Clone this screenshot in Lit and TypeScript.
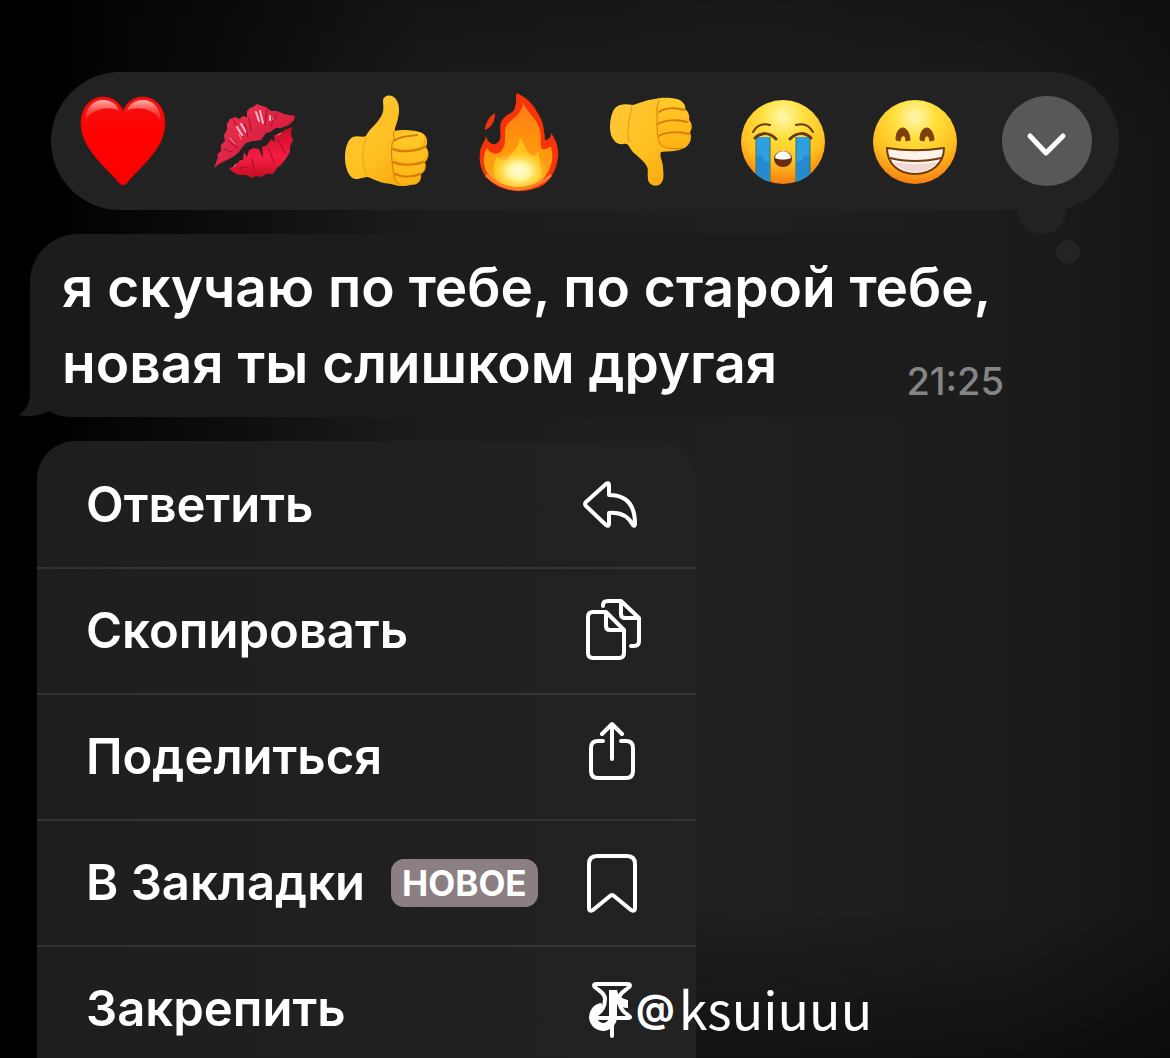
import { LitElement, html, svg, css } from "lit";
import { customElement, property } from "lit/decorators.js";

const reactions = [
  {
    name: "Сердце",
    art: svg`
      <path d="M50 94C47 94 45 90 42 87C28 72 8 55 8 32C8 16 18 6 30 6C40 6 47 12 50 20C53 12 60 6 70 6C82 6 92 16 92 32C92 55 72 72 58 87C55 90 53 94 50 94Z" fill="url(#heartFill)" stroke="#c80a0c" stroke-width="1"/>
      <path d="M12 31C12 17 20 9 30 9C38 9 44 13 46 20C39 15 18 16 12 31Z" fill="url(#heartShine)"/>
      <path d="M88 31C88 17 80 9 70 9C62 9 56 13 54 20C61 15 82 16 88 31Z" fill="url(#heartShine)"/>`,
  },
  {
    name: "Поцелуй",
    art: svg`
      <path d="M9 77L13 66L12 64L16 60L16 54L20 50L19 44L22 39L22 33L25 28L30 26L34 28L38 25L42 26L42 20L45 17L48 16L52 13L57 15L61 16L66 20L72 20L79 23L90 25L89 29L84 34L76 37L71 37L65 41L61 42L56 49L48 50L41 52L36 58L34 61L28 66L20 70L14 73Z" fill="url(#lipTop)"/>
      <path d="M24 78L31 74L35 69L38 69L39 61L42 66L44 59L49 57L54 58L58 67L57 56L62 54L66 48L70 51L69 44L76 42L80 39L87 36L86 43L88 49L85 56L85 61L80 69L76 74L72 77L68 83L61 83L57 86L51 85L47 87L41 84L33 84L28 81Z" fill="url(#lipBottom)"/>
      <g fill="none" stroke="#ffb9c4" stroke-linecap="round" stroke-width="2">
        <path d="M32 36L37 44M36 33L41 41M51 21L54 30M55 20L58 32M65 25L65 29" />
        <path d="M25 47L30 53M34 43L36 48M68 27L69 30M29 76L31 73M73 44L76 42" stroke="#f8909c" stroke-width="1"/>
      </g>
      <g fill="none" stroke="#ab0a28" stroke-linecap="round" stroke-width="1">
        <path d="M19 58L27 61M23 50L33 57M44 27L46 40M62 18L60 34M28 28L31 34M72 23L66 35M47 68L49 80M64 58L69 72M73 48L80 62M35 77L42 76M40 33L43 46"/>
      </g>`,
  },
  {
    name: "Палец вверх",
    art: svg`
      <path d="M46 9C47 4 54 3 58 7C62 11 63 19 61 27C60 33 57 38 58 40C64 38 80 39 85 42C91 45 91 52 89 56C93 61 92 68 88 71C90 76 88 81 84 83C85 89 82 94 74 94C66 96 60 95 54 93C44 92 38 89 31 86C27 86 24 88 18 88C11 86 8 76 8 66C8 57 11 48 16 46C21 44 26 47 29 45C32 38 39 34 43 27C48 21 46 14 46 9Z" fill="url(#hand)"/>
      <path d="M55 49C59 42 77 38 86 43C88 47 88 53 82 56C72 58 57 60 56 53ZM56 60C63 63 79 61 88 57C92 62 89 69 84 70C73 73 58 72 56 66ZM56 73C62 76 78 75 87 71C89 77 86 82 81 83C72 86 59 84 56 79ZM57 84C63 87 75 87 83 84C83 90 79 93 73 93C65 95 58 91 57 84Z" fill="url(#finger)"/>
      <g fill="none" stroke="#d97b08" stroke-width="2" stroke-linecap="round">
        <path d="M57 50C60 46 72 45 80 44M56 58C64 62 80 60 88 56M56 71C65 75 79 74 87 71M58 83C66 87 76 86 83 83"/>
        <path d="M58 40C54 42 59 45 56 50C53 58 55 74 57 84C57 88 59 91 62 93" stroke-width="1"/>
        <path d="M29 47C25 55 24 75 30 85" stroke="#eda315" stroke-width="1"/>
      </g>`,
  },
  {
    name: "Огонь",
    art: svg`
      <path d="M48 2C58 7 65 14 68 21C75 30 75 40 76 49C80 49 82 46 82 42C87 49 90 57 89 66C88 73 87 78 83 84C78 95 65 100 50 100C34 100 20 92 15 83C11 76 10 69 11 62C11 55 16 51 17 45C19 53 26 56 30 50C34 45 28 35 34 28C38 22 45 23 46 16C48 11 46 5 48 2Z" fill="#f63408"/>
      <path d="M26 22C26 30 23 36 16 39C16 31 21 25 26 22Z" fill="#f3330b"/>
      <path d="M54 12C58 21 69 28 71 40C73 48 70 53 73 58C78 59 80 56 82 56C85 66 83 76 77 84C70 98 33 101 20 84C14 78 13 64 18 57C22 65 32 64 34 57C38 51 34 41 38 34C43 27 53 24 54 12Z" fill="url(#flame)"/>
      <path d="M51 47C57 53 56 62 63 65C66 67 68 60 70 61C70 72 73 76 72 86C67 99 33 99 27 87C23 78 25 69 29 65C32 73 38 70 40 66C45 60 50 56 51 47Z" fill="#ffc219"/>
      <ellipse cx="50" cy="80" rx="28" ry="21" fill="url(#glow)"/>
      <path d="M17 84C29 94 36 97 49 98C65 97 74 92 82 84" fill="none" stroke="#ff7d2c" stroke-width="3"/>`,
  },
  {
    name: "Палец вниз",
    art: svg`
      <path d="M54 8C61 6 75 6 80 10C84 13 85 16 84 18C88 21 89 26 88 29C91 32 92 37 89 41C92 48 88 56 81 58C74 61 66 60 60 61C58 65 62 70 62 77C63 85 63 91 58 94C53 96 47 93 47 88C46 82 48 78 45 74C41 67 33 64 29 57C27 53 26 52 22 53C17 54 13 51 10 44C8 36 9 24 14 17C19 12 26 13 32 14C39 12 45 9 54 8Z" fill="url(#hand)"/>
      <path d="M58 15C58 7 75 6 80 10C83 13 83 17 79 18C71 17 64 18 58 21ZM57 25C60 19 78 16 85 20C88 24 87 28 82 29C74 28 64 30 57 33ZM57 37C63 31 80 29 87 32C91 36 89 41 84 43C73 41 64 43 58 46ZM58 49C62 43 80 41 88 44C90 52 86 57 80 57C68 59 58 56 58 49Z" fill="url(#finger)"/>
      <g fill="none" stroke="#d97b08" stroke-width="2" stroke-linecap="round">
        <path d="M58 21C63 17 74 16 83 19M57 33C64 29 76 28 86 31M58 45C64 41 79 40 88 43"/>
        <path d="M58 10C54 18 57 25 56 33C56 41 57 49 59 53C61 57 74 59 81 57" stroke-width="1"/>
        <path d="M31 15C29 25 25 39 28 51" stroke="#e79513" stroke-width="1"/>
      </g>`,
  },
  {
    name: "Рыдаю",
    art: svg`
      <circle cx="50" cy="51" r="42" fill="url(#face)"/>
      <g clip-path="url(#faceClip)">
        <path d="M23 46H37V96H23ZM63 46H77V96H63Z" fill="#2f9fe0"/>
        <path d="M28 64C31 70 34 72 36 70V96H23V66ZM72 64C69 70 66 72 64 70V96H77V66Z" fill="#248bd1"/>
        <path d="M23 46V96M37 46V96M63 46V96M77 46V96" stroke="#287d62" stroke-width="1"/>
      </g>
      <g fill="none" stroke="#6b390d" stroke-linecap="round">
        <path d="M20 41C24 34 30 32 37 34M80 41C76 34 70 32 63 34" stroke-width="2"/>
        <path d="M22 47C28 41 36 41 43 48M78 47C72 41 64 41 57 48" stroke-width="3"/>
      </g>
      <ellipse cx="50" cy="68" rx="9" ry="8" fill="#6a2c0c"/>
      <path d="M42 67C43 58 57 58 58 67C53 69 47 69 42 67Z" fill="#fff"/>`,
  },
  {
    name: "Смех",
    art: svg`
      <circle cx="50" cy="51" r="42" fill="url(#face)"/>
      <path d="M31 49C31 33 44 33 45 49L41 50C41 43 36 43 35 50ZM55 49C55 33 68 33 69 49L65 50C64 43 60 43 59 50Z" fill="#7c3f0a" stroke="#7c3f0a" stroke-linejoin="round"/>
      <path d="M22 57C40 60 60 60 79 57C79 73 66 83 50 83C34 83 22 73 22 57Z" fill="#fff3ec" stroke="#713a0c" stroke-width="2" stroke-linejoin="round"/>
      <path d="M25 67C40 71 60 71 76 67" fill="none" stroke="#713a0c" stroke-width="2"/>
      <path d="M28 71C40 74 60 74 73 71C61 84 40 84 28 71Z" fill="#eed8d1"/>`,
  },
];

const emojiDefs = svg`<defs>
  <linearGradient id="heartFill" x2="0" y2="1"><stop offset="0" stop-color="#ef1515"/><stop offset=".4" stop-color="#ff0200"/><stop offset="1" stop-color="#fa0000"/></linearGradient>
  <linearGradient id="heartShine" x2="0" y2="1"><stop offset="0" stop-color="#ffb0ab"/><stop offset="1" stop-color="#ff2a22" stop-opacity=".3"/></linearGradient>
  <linearGradient id="lipTop" x2="1" y2="1"><stop offset="0" stop-color="#ed3855"/><stop offset=".5" stop-color="#dd2445"/><stop offset="1" stop-color="#d40b22"/></linearGradient>
  <linearGradient id="lipBottom" x2="0" y2="1"><stop offset="0" stop-color="#c70b25"/><stop offset=".6" stop-color="#f51e42"/><stop offset="1" stop-color="#c40d22"/></linearGradient>
  <linearGradient id="hand" x2="1" y2="1"><stop offset="0" stop-color="#ffc83a"/><stop offset=".5" stop-color="#ffc120"/><stop offset="1" stop-color="#f19c08"/></linearGradient>
  <linearGradient id="finger" x2="0" y2="1"><stop offset="0" stop-color="#ffcc2a"/><stop offset="1" stop-color="#fdb114"/></linearGradient>
  <linearGradient id="flame" x2="0" y2="1"><stop offset="0" stop-color="#ff7a16"/><stop offset=".5" stop-color="#ff960c"/><stop offset="1" stop-color="#ffa51c"/></linearGradient>
  <radialGradient id="glow"><stop offset="0" stop-color="#fffbe0"/><stop offset=".4" stop-color="#fff59a"/><stop offset="1" stop-color="#ffd52a" stop-opacity="0"/></radialGradient>
  <radialGradient id="face" cx=".5" cy=".2" r=".84"><stop offset="0" stop-color="#fff7b0"/><stop offset=".3" stop-color="#ffe03c"/><stop offset=".65" stop-color="#ffc021"/><stop offset="1" stop-color="#f5730e"/></radialGradient>
  <clipPath id="faceClip"><circle cx="50" cy="51" r="42"/></clipPath>
</defs>`;

const actions = [
  {
    label: "Ответить",
    icon: svg`<path d="M27 11L7 29Q5 31 7 33L27 52Q30 54 30 51V40C42 39 49 43 54 52Q56 54 56 51C56 34 49 22 30 22V12Q30 9 27 11Z"/>`,
  },
  {
    label: "Скопировать",
    icon: svg`<path d="M27 13H14Q9 13 9 18V54Q9 59 14 59H40Q45 59 45 54V31ZM27 13V27Q27 31 31 31H45"/><path d="M24 7V6Q24 2 29 2H42L60 19V42Q60 47 55 47H52M42 2V15Q42 19 46 19H60"/>`,
  },
  {
    label: "Поделиться",
    icon: svg`<path d="M24 16H19Q12 16 12 23V46Q12 53 19 53H47Q54 53 54 46V23Q54 16 47 16H42M33 34V0M23 9L33 -1L43 9"/>`,
  },
  {
    label: "В Закладки",
    badge: "НОВОЕ",
    icon: svg`<path d="M18 5H48Q56 5 56 13V57Q56 61 52 59L35 45Q33 43 31 45L14 59Q10 61 10 57V13Q10 5 18 5Z"/>`,
  },
  {
    label: "Закрепить",
    icon: svg`<path d="M17 7H49Q53 8 49 11C44 15 40 17 40 22C40 29 42 34 49 38Q53 41 49 41H17Q13 41 17 38C24 34 26 29 26 22C26 17 22 15 17 11Q13 8 17 7ZM33 42V59"/>`,
  },
];

@customElement("reaction-bar")
class ReactionBar extends LitElement {
  static styles = css`
    :host {
      display: block;
      position: relative;
    }
    .bar {
      display: grid;
      grid-template-columns: repeat(8, 1fr);
      align-items: center;
      justify-items: center;
      padding: 19px 6px;
      border-radius: 69px;
      background: #222;
      position: relative;
    }
    button {
      display: grid;
      padding: 0;
      border: 0;
      background: none;
      cursor: pointer;
    }
    .emoji {
      width: 100px;
      height: 100px;
      overflow: visible;
    }
    .more {
      width: 90px;
      height: 90px;
      border-radius: 50%;
      background: #585858;
      place-items: center;
    }
    .dot {
      position: absolute;
      border-radius: 50%;
      background: #222;
    }
    .large {
      width: 48px;
      height: 48px;
      right: 53px;
      bottom: -24px;
    }
    .small {
      width: 24px;
      height: 24px;
      right: 39px;
      bottom: -54px;
      background: #242424;
    }
  `;

  render() {
    return html`
      <span class="dot large"></span>
      <span class="dot small"></span>
      <div class="bar" role="group" aria-label="Реакции">
        ${reactions.map(
          (r) => html`<button type="button" aria-label=${r.name}>
            <svg class="emoji" viewBox="0 0 100 100" aria-hidden="true">${emojiDefs}${r.art}</svg>
          </button>`
        )}
        <button type="button" class="more" aria-label="Ещё реакции">
          <svg width="46" height="46" viewBox="0 0 46 46" fill="none" stroke="#fff" stroke-width="5" stroke-linecap="round" stroke-linejoin="round" aria-hidden="true">
            <path d="M6 18L22 35L39 18" />
          </svg>
        </button>
      </div>
    `;
  }
}

@customElement("message-bubble")
class MessageBubble extends LitElement {
  @property() time = "";

  static styles = css`
    :host {
      display: block;
      position: relative;
      padding: 15px 32px 16px;
      border-radius: 48px 48px 48px 40px;
      background: linear-gradient(90deg, #1c1c1c 80%, #1c1c1c00);
    }
    .text {
      margin: 0;
      font-size: 55px;
      line-height: 76px;
      font-weight: 600;
      color: #fff;
    }
    time {
      float: right;
      margin: 37px 29px 0 0;
      font-size: 38px;
      line-height: 39px;
      font-weight: 500;
      color: #858585;
    }
    .tail {
      position: absolute;
      left: -14px;
      bottom: 0;
      width: 48px;
      height: 48px;
    }
  `;

  render() {
    return html`
      <svg class="tail" viewBox="0 0 48 48" aria-hidden="true">
        <path d="M14 0V26C13 36 9 42 2 46Q20 50 37 40L48 20V0Z" fill="#1c1c1c" />
      </svg>
      <p class="text"><slot></slot><time>${this.time}</time></p>
    `;
  }
}

@customElement("action-menu")
class ActionMenu extends LitElement {
  static styles = css`
    :host {
      display: block;
    }
    .menu {
      margin: 0;
      padding: 2px 0 0;
      list-style: none;
      border-radius: 38px 38px 0 0;
      background: linear-gradient(90deg, #1e1e1e, #222);
    }
    .item + .item {
      border-top: 2px solid #333;
    }
    .action {
      display: flex;
      align-items: center;
      gap: 26px;
      width: 100%;
      height: 124px;
      padding: 0 53px 0 49px;
      border: 0;
      background: none;
      color: #fff;
      font: inherit;
      font-size: 49px;
      line-height: 60px;
      font-weight: 600;
      text-align: left;
      cursor: pointer;
    }
    .badge {
      padding: 0 11px;
      border-radius: 13px;
      background: #8b7f83;
      font-size: 35px;
      line-height: 48px;
      font-weight: 700;
    }
    .icon {
      width: 64px;
      height: 64px;
      margin-left: auto;
      overflow: visible;
      fill: none;
      stroke: #fff;
      stroke-width: 4;
      stroke-linecap: round;
      stroke-linejoin: round;
    }
  `;

  render() {
    return html`<ul class="menu">
      ${actions.map(
        (a) => html`<li class="item">
          <button type="button" class="action">
            <span>${a.label}</span>
            ${a.badge ? html`<span class="badge">${a.badge}</span>` : null}
            <svg class="icon" viewBox="0 0 64 64" aria-hidden="true">${a.icon}</svg>
          </button>
        </li>`
      )}
    </ul>`;
  }
}

@customElement("app-root")
class AppRoot extends LitElement {
  static styles = css`
    :host {
      display: block;
      font-family: Inter, "Liberation Sans", sans-serif;
    }
    .screen {
      position: relative;
      box-sizing: border-box;
      height: 100vh;
      overflow: hidden;
      padding: 72px 51px 0 30px;
      background:
        linear-gradient(180deg, #00000048, #00000000 14%, #00000000 86%, #00000070),
        linear-gradient(90deg, #000 0, #000 4%, #0c0c0c 18%, #1c1c1c 36%, #202020 64%, #1c1c1c 86%, #141414 100%);
    }
    .reactions {
      margin-left: 21px;
    }
    .message {
      margin-top: 24px;
      margin-right: 54px;
    }
    .actions {
      margin: 24px 0 0 7px;
      width: 62%;
      max-width: 659px;
    }
    .signature {
      position: absolute;
      left: 587px;
      bottom: 10px;
      display: flex;
      align-items: center;
      color: #fff;
      font-family: "Noto Sans CJK SC", sans-serif;
      font-size: 52px;
      line-height: 80px;
    }
    .note {
      width: 44px;
      height: 52px;
      margin-right: 5px;
    }
    .at {
      font-family: Inter, sans-serif;
      font-size: 38px;
      font-weight: 700;
      margin-right: 4px;
    }
  `;

  render() {
    return html`
      <main class="screen">
        <reaction-bar class="reactions"></reaction-bar>
        <message-bubble class="message" time="21:25">я скучаю по тебе, по старой тебе, новая ты слишком другая</message-bubble>
        <action-menu class="actions"></action-menu>
        <div class="signature">
          <svg class="note" viewBox="0 0 44 52" aria-hidden="true">
            <path d="M26 12V34A10 10 0 1 1 15 25" fill="none" stroke="#fff" stroke-width="8" />
            <path d="M22 8H30C31 14 35 17 41 18V26C36 26 32 24 29 21H22Z" fill="#fff" />
          </svg>
          <span class="at">@</span><span>ksuiuuu</span>
        </div>
      </main>
    `;
  }
}
